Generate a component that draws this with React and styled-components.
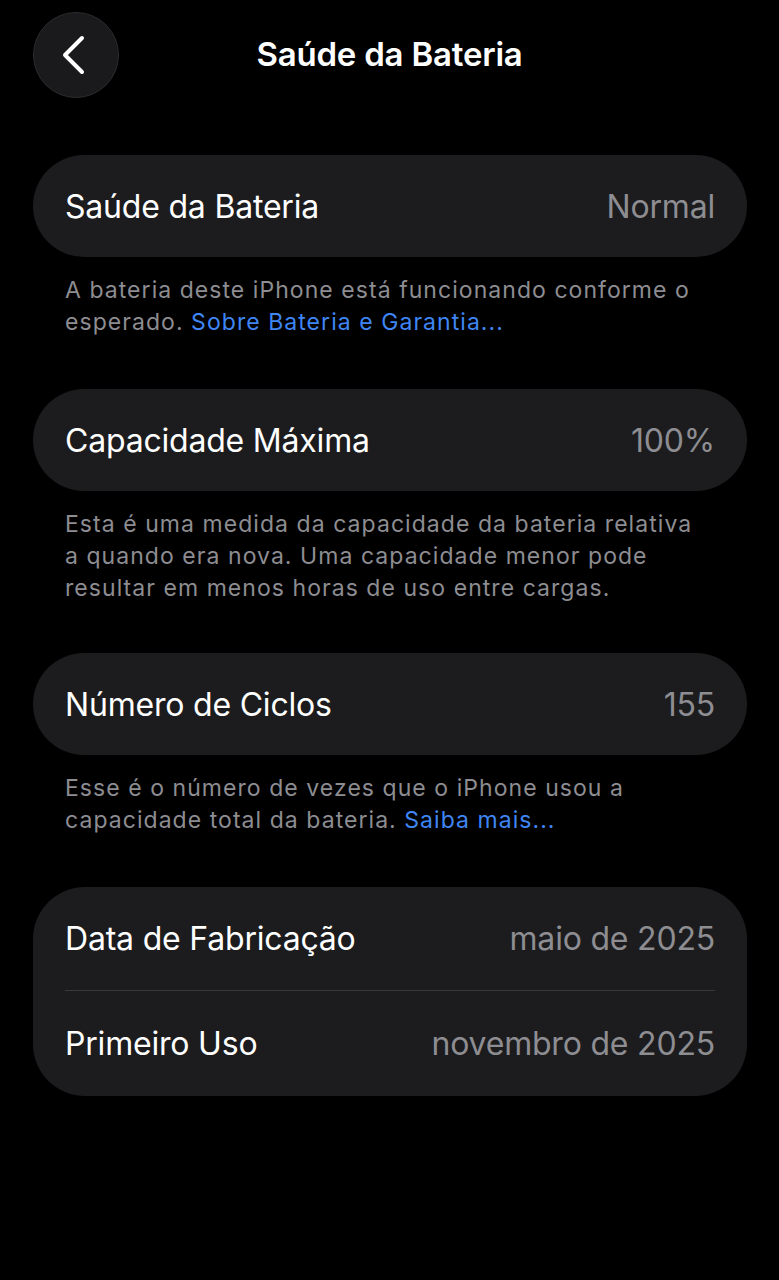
import React from 'react';
import styled, { createGlobalStyle } from 'styled-components';

const Global = createGlobalStyle`
  html, body {
    margin: 0;
    padding: 0;
    background: #000;
  }
  body {
    font-family: Inter, Roboto, "Noto Sans", sans-serif;
    -webkit-font-smoothing: antialiased;
  }
`;

const Screen = styled.div`
  min-height: 1280px;
  background: #000;
  color: #fff;
  display: flex;
  flex-direction: column;
`;

const Header = styled.header`
  position: relative;
  height: 110px;
  display: flex;
  align-items: center;
  justify-content: center;
`;

const BackButton = styled.button`
  position: absolute;
  left: 33px;
  top: 12px;
  width: 86px;
  height: 86px;
  border-radius: 50%;
  background: #1a1a1c;
  border: 1px solid #2c2c2e;
  display: flex;
  align-items: center;
  justify-content: center;
  padding: 0;
  cursor: pointer;
`;

const Title = styled.h1`
  margin: 0;
  margin-top: -2px;
  font-size: 33px;
  font-weight: 600;
  letter-spacing: -0.2px;
  color: #fff;
`;

const Content = styled.main`
  display: flex;
  flex-direction: column;
  padding: 45px 32px 0 33px;
`;

const Section = styled.section`
  display: flex;
  flex-direction: column;
  margin-bottom: ${p => p.$gap ?? 51}px;
`;

const Card = styled.div`
  background: #1c1c1e;
  border-radius: 52px;
  padding: 0 32px;
  display: flex;
  flex-direction: column;
`;

const Row = styled.div`
  height: ${p => p.$h || 102}px;
  display: flex;
  align-items: center;
  justify-content: space-between;
  font-size: 32px;
  letter-spacing: -0.2px;
  border-bottom: ${p => (p.$divider ? '1px solid #38383a' : 'none')};
`;

const Label = styled.span`
  color: #fff;
`;

const Value = styled.span`
  color: #8d8d92;
`;

const Footer = styled.p`
  margin: 17px 0 0;
  padding: 0 38px 0 32px;
  font-size: 23px;
  line-height: 32px;
  color: #8d8d92;
  letter-spacing: 1.05px;
`;

const Link = styled.a`
  color: #3f86f4;
  text-decoration: none;
`;

function ChevronLeft() {
  return (
    <svg width="28" height="40" viewBox="0 0 28 40" fill="none">
      <path d="M20 3 L3 20 L20 37" stroke="#fff" strokeWidth="4" strokeLinecap="round" strokeLinejoin="round" />
    </svg>
  );
}

export default function App() {
  return (
    <Screen>
      <Global />
      <Header>
        <BackButton aria-label="Voltar">
          <ChevronLeft />
        </BackButton>
        <Title>Saúde da Bateria</Title>
      </Header>
      <Content>
        <Section>
          <Card>
            <Row>
              <Label>Saúde da Bateria</Label>
              <Value>Normal</Value>
            </Row>
          </Card>
          <Footer>
            A bateria deste iPhone está funcionando conforme o esperado.{' '}
            <Link href="#">Sobre Bateria e Garantia...</Link>
          </Footer>
        </Section>
        <Section $gap={49}>
          <Card>
            <Row>
              <Label>Capacidade Máxima</Label>
              <Value>100%</Value>
            </Row>
          </Card>
          <Footer>
            Esta é uma medida da capacidade da bateria relativa a quando era nova. Uma capacidade menor pode resultar em menos horas de uso entre cargas.
          </Footer>
        </Section>
        <Section>
          <Card>
            <Row>
              <Label>Número de Ciclos</Label>
              <Value>155</Value>
            </Row>
          </Card>
          <Footer>
            Esse é o número de vezes que o iPhone usou a capacidade total da bateria.{' '}
            <Link href="#">Saiba mais...</Link>
          </Footer>
        </Section>
        <Section $gap={0}>
          <Card>
            <Row $h={103} $divider>
              <Label>Data de Fabricação</Label>
              <Value>maio de 2025</Value>
            </Row>
            <Row $h={105}>
              <Label>Primeiro Uso</Label>
              <Value>novembro de 2025</Value>
            </Row>
          </Card>
        </Section>
      </Content>
    </Screen>
  );
}
